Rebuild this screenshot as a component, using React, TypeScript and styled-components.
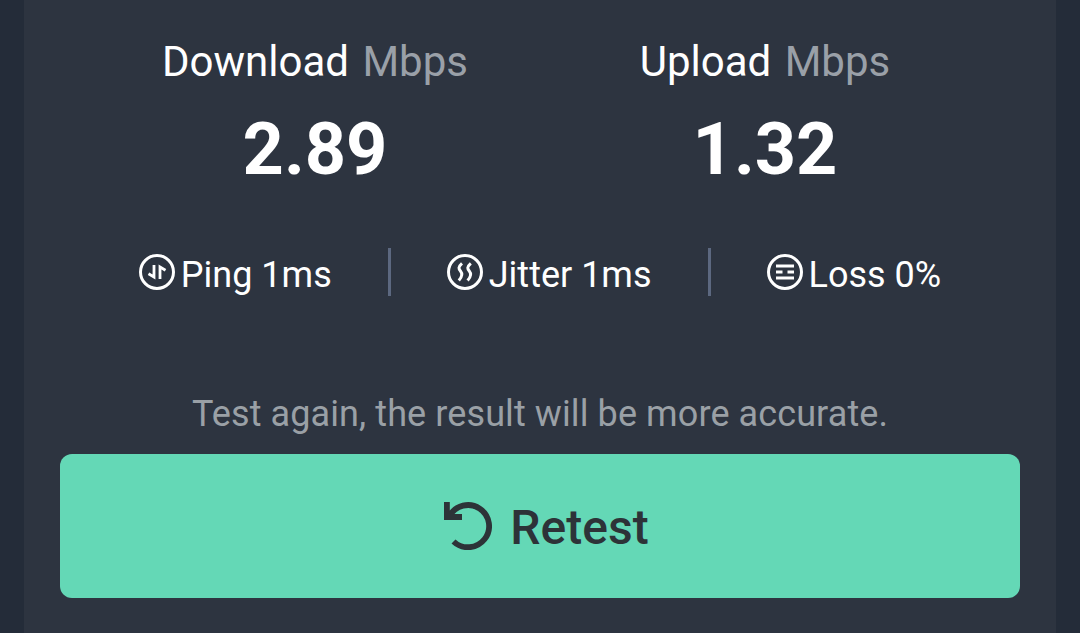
import styled, { createGlobalStyle } from "styled-components";

const GlobalStyle = createGlobalStyle`
  * {
    box-sizing: border-box;
  }

  body {
    margin: 0;
    background-color: #242c39;
    font-family: Roboto, sans-serif;
  }
`

const Panel = styled.main`
  width: 1032px;
  height: 633px;
  margin: 0 auto;
  padding: 37px 36px 0;
  background-color: #2d3440;
  color: #ffffff;
`

const Speeds = styled.section`
  display: flex;
  padding: 0 30px;
`

const Speed = styled.div`
  flex: 1;
  text-align: center;
`

const SpeedLabel = styled.div`
  font-size: 42px;
  line-height: 50px;
  white-space: nowrap;
`

const Unit = styled.span`
  margin-left: 3px;
  color: #9aa0a8;
`

const SpeedValue = styled.div`
  margin-top: 21px;
  font-size: 72px;
  line-height: 84px;
  font-weight: 700;
`

const Stats = styled.section`
  display: flex;
  align-items: center;
  justify-content: center;
  margin-top: 56px;
  height: 48px;
`

const Stat = styled.div`
  display: flex;
  align-items: center;
  gap: 6px;
`

const StatText = styled.span`
  padding-top: 6px;
  font-size: 36px;
  line-height: 42px;
  white-space: nowrap;
`

const Divider = styled.div`
  width: 3px;
  height: 48px;
  margin: 0 56px;
  background-color: #5c6880;
`

const Hint = styled.p`
  margin: 94px 0 16px;
  font-size: 36px;
  line-height: 48px;
  letter-spacing: 0.1px;
  text-align: center;
  color: #9aa0a6;
`

const RetestButton = styled.button`
  display: flex;
  align-items: center;
  justify-content: center;
  gap: 18px;
  width: 100%;
  height: 144px;
  padding: 0 0 0 13px;
  border: 0;
  border-radius: 12px;
  background-color: #64d8b6;
  color: #2d3338;
`

const RetestText = styled.span`
  padding-top: 3px;
  font: 500 48px/56px Roboto, sans-serif;
`

const StatIcon = styled.svg`
  width: 36px;
  height: 36px;
  fill: none;
  stroke: currentColor;
  stroke-width: 3;
`

const PingIcon = () => (
    <StatIcon viewBox="0 0 36 36">
        <circle cx="18" cy="18" r="16.5"/>
        <path d="M15 11V23L9.5 19.8M21 25V13L26.5 16.2" strokeWidth="2.8"/>
    </StatIcon>
)

const JitterIcon = () => (
    <StatIcon viewBox="0 0 36 36">
        <circle cx="18" cy="18" r="16.5"/>
        <path d="M15 9.3C10.8 13 11.6 14.8 13.6 17.2S15.8 22 11.8 26.5M23.8 9.3C19.6 13 20.4 14.8 22.4 17.2S24.6 22 20.6 26.5"/>
    </StatIcon>
)

const LossIcon = () => (
    <StatIcon viewBox="0 0 36 36">
        <circle cx="18" cy="18" r="16.5"/>
        <path d="M9 12H27M9 18H15.5M20.5 18H27M9 24H27"/>
    </StatIcon>
)

const RetestIcon = () => (
    <svg width="48" height="48" viewBox="0 0 48 48" fill="none" stroke="currentColor" strokeWidth="5.8">
        <path d="M2.9 0V15H18M5.5 14A21.1 21.1 0 1 1 9.5 39.5"/>
    </svg>
)

export default function App() {
    return (
        <>
            <GlobalStyle/>
            <Panel>
                <Speeds>
                    <Speed>
                        <SpeedLabel>Download <Unit>Mbps</Unit></SpeedLabel>
                        <SpeedValue>2.89</SpeedValue>
                    </Speed>
                    <Speed>
                        <SpeedLabel>Upload <Unit>Mbps</Unit></SpeedLabel>
                        <SpeedValue>1.32</SpeedValue>
                    </Speed>
                </Speeds>
                <Stats>
                    <Stat><PingIcon/><StatText>Ping 1ms</StatText></Stat>
                    <Divider/>
                    <Stat><JitterIcon/><StatText>Jitter 1ms</StatText></Stat>
                    <Divider/>
                    <Stat><LossIcon/><StatText>Loss 0%</StatText></Stat>
                </Stats>
                <Hint>Test again, the result will be more accurate.</Hint>
                <RetestButton><RetestIcon/><RetestText>Retest</RetestText></RetestButton>
            </Panel>
        </>
    );
}
